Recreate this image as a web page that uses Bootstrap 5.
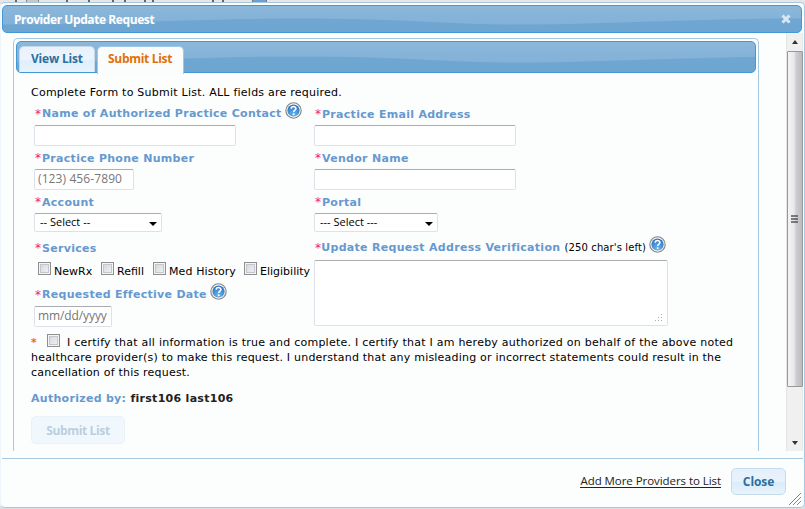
<!DOCTYPE html>
<html lang="en">
<head>
<meta charset="utf-8">
<title>Provider Update Request</title>
<link href="https://cdn.jsdelivr.net/npm/bootstrap@5.3.0/dist/css/bootstrap.min.css" rel="stylesheet">
<style>
body{width:805px;height:509px;background:#dedfe2;font:11px/15px "DejaVu Sans",sans-serif;color:#000}
.behind{height:2px;background:#e6e6e6;overflow:hidden;flex:none;padding-left:8px}
.behind i{height:2px;background:#666;width:2px}
.behind .q{width:15px;background:#6f9fd0;border-left:1px solid #777;border-right:1px solid #777}
.behind .c{width:13px;background:#c8c8c8;border-left:1px solid #888;border-right:1px solid #888}
.dialog-box{height:506px;width:805px;border:1px solid #a6c9e2;border-left-color:#eef5fa;border-radius:5px;background:#fcfdfd;padding:2px 1px 0}
.lucida{font-family:"Open Sans",sans-serif;font-weight:700;font-size:12px;letter-spacing:-.35px}
.blue-bar{border:1px solid #4297d7;border-radius:5px}
.titlebar{height:28px;width:800px;color:#fff;padding:0 10px 0 11px;letter-spacing:-.42px}
.bar-bg{background:url("data:image/svg+xml,%3Csvg xmlns='http://www.w3.org/2000/svg' width='500' height='40'%3E%3Cpath d='M0 18.5C90 18.5 170 12.5 283 12.5S420 18.5 500 18.5V40H0z' fill='%235c9ccc' fill-opacity='.5'/%3E%3C/svg%3E") 15px 0 repeat-x,linear-gradient(#8bb7da,#84b2d8 55%,#80afd6)}
.tab-head.bar-bg{background-position:0 2px,0 0}
.body-area{height:418px}
.scroll-pane{width:784px;padding:5px 0 0 11px;overflow:hidden}
.tabs-box{width:746px;height:414px;border:1px solid #a6c9e2;border-bottom:0;border-radius:5px 5px 0 0;padding:2px}
.tab-head{height:32px;padding:4px 0 0 2px;gap:2px}
.tab-item{height:26px;border:1px solid #c5dbec;border-bottom:0;border-radius:5px 5px 0 0;color:#2e6e9e;background:linear-gradient(#e8f1fb 0,#edf4fc 50%,#dfeffc 52%,#e8f3fc);padding:4px 0 0 11px;width:76px;line-height:16px;letter-spacing:-.2px}
.tab-item.on{width:87px;height:28px;background:#fbfcfc;border-color:#9fc9e8;color:#e17009;padding-left:10px;letter-spacing:-.3px}
.panel{padding:12px 0 0 15px}
.intro,.cert{letter-spacing:.24px}
.form-cols{margin-top:3px}
.fcol{width:280px;padding-left:3px}
.lbl{height:22px;line-height:22px;font-weight:700;color:#6699cf;white-space:nowrap;padding-left:1px;letter-spacing:.29px}
.lbl b{color:#f0284e;font-weight:400;font-size:12px;width:7px;display:inline-block}
.lbl small{font-size:10px;font-weight:400;color:#000;letter-spacing:.12px}
.field{display:block;height:21px;margin-bottom:1px;border:1px solid #dfe1ea;border-top:1px solid #acadb2;border-radius:2px;background:#fff;width:202px;padding:0 0 2px 3px;font:12px "Open Sans",sans-serif;outline:0}
.field::placeholder{color:#777;opacity:1}
.phone{letter-spacing:.1px}
.date{letter-spacing:-.1px}
.sel{height:19px;border:1px solid #dfe1ea;border-top-color:#acadb2;border-radius:2px;background:#fff;font:11px/16px "Open Sans",sans-serif;padding:0 4px 1px 5px}
.lower{margin-top:5px}
.area{width:354px;height:66px;margin-top:1px;border:1px solid #dfe1ea;border-top-color:#acadb2;border-radius:2px;background:#fff;padding:0 4px 3px 0}
.cb{display:inline-block;width:13px;height:13px;border:1px solid #8e8f8f;background:linear-gradient(135deg,#cfd2d9,#f6f6f6);box-shadow:inset 0 0 0 1px #f4f4f4,inset 0 0 0 2px #c3c6cd;flex:none}
.ck{height:25px;padding:3px 0 0 4px}
.ck span{padding:2px 0 0 3px}
.w1{width:50px}.w2{width:39px}.w3{width:78px}.w3{letter-spacing:.1px}
.help{width:17px;height:17px;flex:none;margin:-1px 0 0 3px}
.cert{margin-top:7px;white-space:nowrap}
.cert .cb{margin:-5px 7px 0 10px}
.cert>div{height:15px}
.cert .l2{letter-spacing:.21px}
.auth{margin-top:11px;letter-spacing:.29px}
.btn-off{margin-top:10px;width:94px;height:28px;border:1px solid #e9f2f8;border-radius:5px;background:#f1f8fd;color:#b9cfe0}
.sbar{width:17px;background:#f0f0f0;border-left:1px solid #e5e5e5;border-right:1px solid #e8e8e8}
.thumb{height:336px;width:16px;border:1px solid #989898;border-radius:1px;background:linear-gradient(90deg,#f4f4f4,#e8e8ea 45%,#cfd0d4 55%,#babbc0)}
.foot{border-top:1px solid #a6c9e2;margin-top:7px;height:46px;padding-right:17px;gap:10px}
.addlink{color:#222;font:11.5px/12px "Open Sans",sans-serif;letter-spacing:-.06px;text-decoration:none;border-bottom:1px solid #222}
.btn-close2{width:55px;height:27px;margin-top:-1px;border:1px solid #c5dbec;border-radius:5px;color:#2e6e9e;background:linear-gradient(#e4f0fb 0,#e8f2fc 50%,#d9ecfb 53%,#e8f3fc);letter-spacing:-.1px}
.grip{right:3px;bottom:2px}
</style>
<script src="https://cdn.jsdelivr.net/npm/bootstrap@5.3.0/dist/js/bootstrap.bundle.min.js"></script>
</head>
<body class="overflow-hidden">
<svg width="0" height="0" class="position-absolute"><defs>
<radialGradient id="hg" cx=".5" cy=".8" r=".7"><stop offset="0" stop-color="#66b8f0"/><stop offset="1" stop-color="#2f76c4"/></radialGradient>
<symbol id="help" viewBox="0 0 17 17"><circle cx="8.5" cy="8.5" r="7.7" fill="#f4f4f4" stroke="#858585" stroke-width="1.1"/><circle cx="8.5" cy="8.5" r="6.1" fill="url(#hg)"/><path d="M6.2 6.7C6.2 3.8 10.9 3.9 10.9 6.5c0 1.7-2.2 1.7-2.2 3.6" fill="none" stroke="#fff" stroke-width="1.6"/><circle cx="8.7" cy="12.2" r="1" fill="#fff"/></symbol>
</defs></svg>
<div class="behind d-flex"><i style="margin-left:7px"></i><i class="c" style="margin-left:9px"></i><i style="margin-left:27px"></i><i style="margin-left:20px"></i><i style="margin-left:22px"></i><i style="margin-left:10px"></i><i style="margin-left:18px"></i><i style="margin-left:6px"></i><i style="margin-left:58px"></i><i style="margin-left:8px"></i><i class="q" style="margin-left:28px"></i></div>
<main class="dialog-box position-relative">
  <header class="titlebar blue-bar bar-bg lucida d-flex align-items-center justify-content-between">
    <span>Provider Update Request</span>
    <svg width="10" height="10" viewBox="0 0 10 10"><path d="M1.5 1.5l7 7M8.5 1.5l-7 7" stroke="#d8e7f3" stroke-width="3"/></svg>
  </header>
  <div class="body-area d-flex">
    <div class="scroll-pane">
      <div class="tabs-box">
        <nav class="tab-head blue-bar bar-bg lucida d-flex">
          <div class="tab-item">View List</div><div class="tab-item on">Submit List</div>
        </nav>
        <section class="panel">
          <div class="intro">Complete Form to Submit List. ALL fields are required.</div>
          <div class="d-flex form-cols">
            <div class="fcol">
              <div class="lbl d-flex"><b>*</b>Name of Authorized Practice Contact<svg class="help"><use href="#help"/></svg></div>
              <input class="field">
              <div class="lbl"><b>*</b>Practice Phone Number</div>
              <input class="field phone" style="width:100px" placeholder="(123) 456-7890">
              <div class="lbl"><b>*</b>Account</div>
              <div class="sel d-flex justify-content-between align-items-center" style="width:128px">-- Select --<svg width="8" height="5" class="mt-1"><path d="M0 0h8L4 4z"/></svg></div>
              <div class="lbl lower"><b>*</b>Services</div>
              <div class="ck d-flex text-nowrap"><i class="cb"></i><span class="w1">NewRx</span><i class="cb"></i><span class="w2">Refill</span><i class="cb"></i><span class="w3">Med History</span><i class="cb"></i><span class="w4">Eligibility</span></div>
              <div class="lbl d-flex"><b>*</b>Requested Effective Date<svg class="help"><use href="#help"/></svg></div>
              <input class="field date" style="width:78px" placeholder="mm/dd/yyyy">
            </div>
            <div class="fcol">
              <div class="lbl"><b>*</b>Practice Email Address</div>
              <input class="field">
              <div class="lbl"><b>*</b>Vendor Name</div>
              <input class="field">
              <div class="lbl"><b>*</b>Portal</div>
              <div class="sel d-flex justify-content-between align-items-center" style="width:124px">--- Select ---<svg width="8" height="5" class="mt-1"><path d="M0 0h8L4 4z"/></svg></div>
              <div class="lbl lower d-flex"><b>*</b>Update Request Address Verification&nbsp;<small>(250 char's left)</small><svg class="help"><use href="#help"/></svg></div>
              <div class="area d-flex align-items-end justify-content-end"><svg width="9" height="9" fill="#aaa"><path d="M7 1h1v1H7zM4 4h1v1H4zM7 4h1v1H7zM1 7h1v1H1zM4 7h1v1H4zM7 7h1v1H7z"/></svg></div>
            </div>
          </div>
          <div class="cert"><div class="d-flex align-items-center"><span class="fw-bold" style="color:#f60">*</span><i class="cb"></i>I certify that all information is true and complete. I certify that I am hereby authorized on behalf of the above noted</div><div class="l2">healthcare provider(s) to make this request. I understand that any misleading or incorrect statements could result in the</div><div class="l2">cancellation of this request.</div></div>
          <div class="auth fw-bold"><span style="color:#6699cf">Authorized by:</span> <span style="color:#222">first106 last106</span></div>
          <div class="btn-off lucida d-flex align-items-center justify-content-center">Submit List</div>
        </section>
      </div>
    </div>
    <div class="sbar d-flex flex-column justify-content-between align-items-center">
      <svg width="8" height="18"><path d="M1 11h6L4 7z" fill="#333"/></svg>
      <div class="thumb d-flex align-items-center justify-content-center"><svg width="7" height="8"><path d="M0 1h7M0 4h7M0 7h7" stroke="#555" stroke-width="1.4"/></svg></div>
      <div class="flex-fill"></div>
      <svg width="8" height="16"><path d="M1 6h6L4 10z" fill="#333"/></svg>
    </div>
  </div>
  <footer class="foot d-flex align-items-center justify-content-end"><a class="addlink">Add More Providers to List</a><div class="btn-close2 lucida d-flex align-items-center justify-content-center">Close</div></footer>
  <svg class="grip position-absolute" width="12" height="12"><path d="M0 12L12 0M4 12l8-8M8 12l4-4" stroke="#4a98d0" fill="none"/></svg>
</main>
</body>
</html>
